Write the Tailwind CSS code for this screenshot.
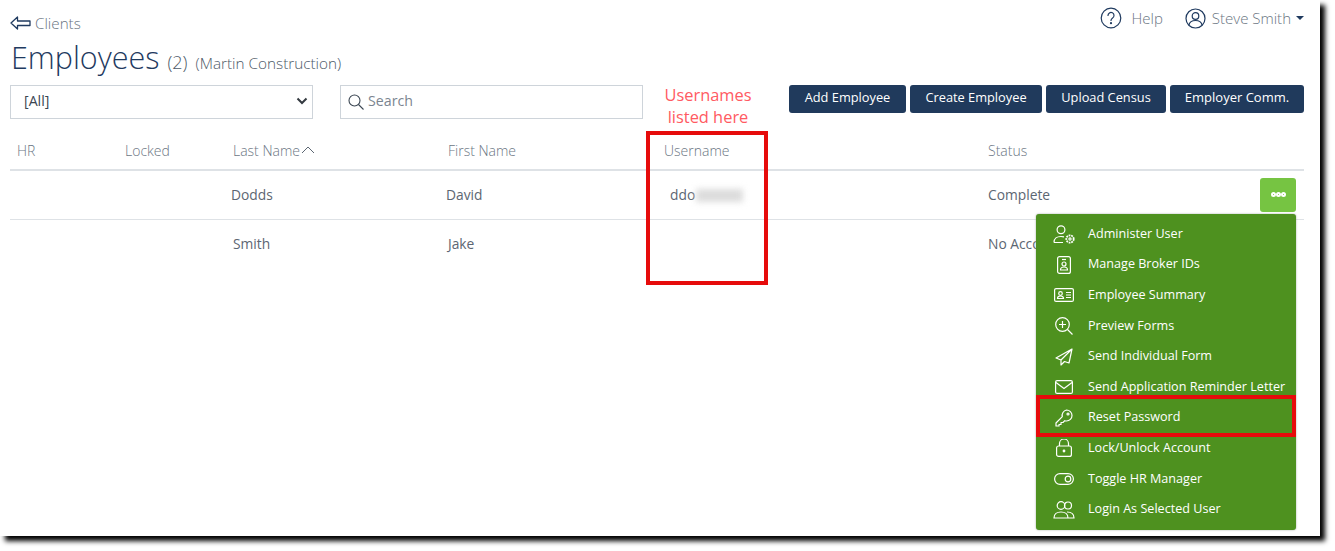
<!DOCTYPE html>
<html lang="en">
<head>
<meta charset="utf-8"/>
<title>Employees</title>
<script src="https://cdn.jsdelivr.net/npm/@tailwindcss/browser@4"></script>
</head>
<body class="bg-white overflow-hidden font-['Open_Sans',sans-serif] text-[13.8px] text-[#5c6672]">
<div class="w-[1335px] h-[551px] overflow-hidden">
  <!-- framed screenshot -->
  <div class="relative w-[1320px] h-[536px] bg-white shadow-[5px_5px_5px_#000] px-[10px]">
    <!-- top row -->
    <div class="w-[1294px] h-[40px] flex justify-between pt-[6px]">
      <a class="flex items-center gap-[4px] h-[34px] text-[15.2px] text-[#6b7683] font-light">
        <svg width="21" height="14" viewBox="0 0 21 14" fill="none" stroke="#1f3a5f" stroke-width="1.300" stroke-linejoin="round"><path d="M7.500 1 1 7l6.500 6V9.500H20V5H7.500z"/></svg>
        <span>Clients</span>
      </a>
      <div class="flex items-start gap-[22px] text-[#6b7683] font-light text-[15px]">
        <div class="flex items-center gap-[9px] h-[24px]">
          <svg width="22" height="22" viewBox="0 0 22 22" fill="none" stroke="#1f3a5f" stroke-width="1.200"><circle cx="11" cy="11" r="9.800"/><path d="M8 8.500a3 3 0 1 1 4.600 2.500c-1 .7-1.600 1.200-1.600 2.500" stroke-linecap="round"/><circle cx="11" cy="16.200" r=".5"/></svg>
          <span>Help</span>
        </div>
        <div class="flex items-center gap-[6px] h-[24px]">
          <svg width="21" height="21" viewBox="0 0 21 21" fill="none" stroke="#1f3a5f" stroke-width="1.200"><circle cx="10.500" cy="10.500" r="9.500"/><circle cx="10.500" cy="8" r="3.300"/><path d="M4 17c.6-3 2.800-4.500 6.500-4.500S16.400 14 17 17"/></svg>
          <span>Steve Smith</span>
          <span class="w-0 h-0 border-x-[4px] border-x-transparent border-t-[4px] border-t-[#1f3a5f] -ml-[1px]"></span>
        </div>
      </div>
    </div>
    <!-- heading -->
    <div class="h-[39px] flex items-baseline pl-[1px] font-light">
      <h1 class="text-[30.500px] leading-[34px] text-[#1f3a5f] font-light">Employees</h1>
      <span class="text-[18px] ml-[8px] text-[#4d5a68]">(2)</span>
      <span class="text-[15.300px] ml-[8px] text-[#4d5a68]">(Martin Construction)</span>
    </div>
    <!-- filters and buttons -->
    <div class="w-[1294px] flex items-start mt-[6px]">
      <div class="w-[303px] h-[34px] border border-[#ced4da] flex items-center justify-between pl-[13px] pr-[4px] pb-[2px] text-[14.200px] text-[#3b4652]">
        <span>[All]</span>
        <svg width="12" height="8" viewBox="0 0 12 8" fill="none" stroke="#343a40" stroke-width="2"><path d="m1.500 1.500 4.500 4.500 4.500-4.500"/></svg>
      </div>
      <div class="w-[303px] h-[34px] ml-[27px] border border-[#ced4da] flex items-center pl-[7px] gap-[4px] text-[14.200px] text-[#7b8590]">
        <svg width="16" height="16" viewBox="0 0 16 16" fill="none" stroke="#3b4652" stroke-width="1.100"><circle cx="6.500" cy="6.500" r="5.500"/><path d="m10.500 10.500 5 5"/></svg>
        <span class="-mt-[2px]">Search</span>
      </div>
      <div class="ml-auto flex gap-[4px] text-[12.800px] text-white">
        <button class="w-[117px] h-[28px] pb-[2px] bg-[#203a5c] rounded-[3px]">Add Employee</button>
        <button class="w-[132px] h-[28px] pb-[2px] bg-[#203a5c] rounded-[3px]">Create Employee</button>
        <button class="w-[120px] h-[28px] pb-[2px] bg-[#203a5c] rounded-[3px]">Upload Census</button>
        <button class="w-[134px] h-[28px] pb-[2px] bg-[#203a5c] rounded-[3px] text-[13px]">Employer Comm.</button>
      </div>
    </div>
    <!-- table -->
    <div class="w-[1294px] mt-[14px]">
      <div class="grid grid-cols-[108px_108px_215px_216px_324px_1fr] h-[38px] border-b-2 border-[#dee2e6] pl-[7px] pb-[2px] items-center font-light text-[14px] text-[#6b7683]">
        <span>HR</span>
        <span>Locked</span>
        <span class="flex items-center gap-[1px]">Last Name<svg width="14" height="8" viewBox="0 0 14 8" fill="none" stroke="#5c6672" stroke-width="1"><path d="m1 7 6-6 6 6"/></svg></span>
        <span>First Name</span>
        <span>Username</span>
        <span>Status</span>
      </div>
      <div class="grid grid-cols-[108px_108px_215px_216px_324px_1fr] h-[49px] border-b border-[#dee2e6] pl-[7px] items-center">
        <span></span>
        <span></span>
        <span class="-ml-[2px]">Dodds</span>
        <span class="-ml-[2px]">David</span>
        <span class="pl-[6px] flex items-center">ddo<span class="w-[47px] h-[13px] bg-[#dcdcdc] blur-[3px] ml-[1px]"></span></span>
        <span class="flex items-center justify-between pr-[8px]"><span>Complete</span>
          <button class="w-[36px] h-[34px] bg-[#76c442] rounded-[3px] flex items-center justify-center pb-[2px]">
            <span class="w-[5px] h-[5px] rounded-full border-2 border-white"></span>
            <span class="w-[5px] h-[5px] rounded-full border-2 border-white"></span>
            <span class="w-[5px] h-[5px] rounded-full border-2 border-white"></span>
          </button>
        </span>
      </div>
      <div class="grid grid-cols-[108px_108px_215px_216px_324px_1fr] h-[49px] pl-[7px] items-center">
        <span></span>
        <span></span>
        <span>Smith</span>
        <span>Jake</span>
        <span></span>
        <span>No Account</span>
      </div>
    </div>

    <!-- dropdown menu over the table -->
    <div class="absolute left-[1036px] top-[214px] w-[260px] h-[316px] bg-[#4e911f] rounded-[3px] text-white text-[12.600px] pt-[5px] shadow-[0_0_2px_#9aa39a]">
      <div class="h-[30.600px] flex items-center"><span class="w-[52px] flex justify-center pl-[4px]">
        <svg width="22" height="19" viewBox="0 0 22 19" fill="none" stroke="white" stroke-width="1.200"><circle cx="8" cy="4.700" r="3.900"/><path d="M1 17.500c0-3.800 3-6 7-6 1 0 2 .1 3 .4M1 17.500h9"/><circle cx="17" cy="14" r="3.700" stroke-width="1.800" stroke-dasharray="1.800 .8"/><circle cx="17" cy="14" r="1.100"/></svg></span><span>Administer User</span></div>
      <div class="h-[30.600px] flex items-center"><span class="w-[52px] flex justify-center pl-[4px]">
        <svg width="14" height="18" viewBox="0 0 14 18" fill="none" stroke="white" stroke-width="1.200"><rect x=".6" y=".6" width="12.800" height="16.800" rx="2"/><path d="M5 3.500h4"/><circle cx="7" cy="8" r="2"/><path d="M3.500 14c0-2 1.500-3 3.500-3s3.500 1 3.500 3z"/></svg></span><span>Manage Broker IDs</span></div>
      <div class="h-[30.600px] flex items-center"><span class="w-[52px] flex justify-center pl-[4px]">
        <svg width="20" height="14" viewBox="0 0 20 14" fill="none" stroke="white" stroke-width="1.200"><rect x=".6" y=".6" width="18.800" height="12.800" rx="1.500"/><circle cx="6.500" cy="5.500" r="1.800"/><path d="M3.500 10.500c0-1.800 1.300-2.500 3-2.500s3 .7 3 2.500z"/><path d="M12 4.500h5M12 7h5M12 9.500h5"/></svg></span><span>Employee Summary</span></div>
      <div class="h-[30.600px] flex items-center"><span class="w-[52px] flex justify-center pl-[4px]">
        <svg width="18" height="18" viewBox="0 0 18 18" fill="none" stroke="white" stroke-width="1.200"><circle cx="7.500" cy="7.500" r="6.800"/><path d="m12.500 12.500 5 5M7.500 4v7M4 7.500h7"/></svg></span><span>Preview Forms</span></div>
      <div class="h-[30.600px] flex items-center"><span class="w-[52px] flex justify-center pl-[4px]">
        <svg width="18" height="18" viewBox="0 0 18 18" fill="none" stroke="white" stroke-width="1.200" stroke-linejoin="round"><path d="M17 1 1 10l5 2zM17 1 6 12v5l3.500-3.500L14 15z"/></svg></span><span>Send Individual Form</span></div>
      <div class="h-[30.600px] flex items-center"><span class="w-[52px] flex justify-center pl-[4px]">
        <svg width="18" height="14" viewBox="0 0 18 14" fill="none" stroke="white" stroke-width="1.200"><rect x=".6" y=".6" width="16.800" height="12.800" rx="1.500"/><path d="m1 2.500 8 6 8-6"/></svg></span><span>Send Application Reminder Letter</span></div>
      <div class="h-[30.600px] flex items-center"><span class="w-[52px] flex justify-center pl-[4px]">
        <svg width="18" height="18" viewBox="0 0 18 18" fill="none" stroke="white" stroke-width="1.200" stroke-linejoin="round"><path d="M11.500 1a5.500 5.500 0 0 1 0 11c-.6 0-1.200-.1-1.700-.3L8 13.500H6v2H4v1.500H1v-3l6.300-6.300A5.500 5.500 0 0 1 11.500 1z"/><circle cx="13" cy="5" r="1"/></svg></span><span>Reset Password</span></div>
      <div class="h-[30.600px] flex items-center"><span class="w-[52px] flex justify-center pl-[4px]">
        <svg width="16" height="18" viewBox="0 0 16 18" fill="none" stroke="white" stroke-width="1.200"><rect x=".6" y="7" width="14.800" height="10.400" rx="2"/><path d="M3.500 7V4.500a4.500 4.500 0 0 1 9 0V7"/><circle cx="8" cy="12" r=".8" fill="white"/></svg></span><span>Lock/Unlock Account</span></div>
      <div class="h-[30.600px] flex items-center"><span class="w-[52px] flex justify-center pl-[4px]">
        <svg width="20" height="12" viewBox="0 0 20 12" fill="none" stroke="white" stroke-width="1.200"><rect x=".6" y=".6" width="18.800" height="10.800" rx="5.400"/><circle cx="14" cy="6" r="2.800"/></svg></span><span>Toggle HR Manager</span></div>
      <div class="h-[30.600px] flex items-center"><span class="w-[52px] flex justify-center pl-[4px]">
        <svg width="22" height="18" viewBox="0 0 22 18" fill="none" stroke="white" stroke-width="1.200"><circle cx="8" cy="4.500" r="3.800"/><circle cx="15" cy="4.500" r="3.500"/><path d="M1 17c0-3.800 3-6 7-6s7 2.200 7 6zM14 11c4 0 7 2 7 6h-6"/></svg></span><span>Login As Selected User</span></div>
    </div>

    <!-- annotations over the screenshot -->
    <div class="absolute left-[646px] top-[131px] w-[122px] h-[154px] border-4 border-[#e60b0b]"></div>
    <div class="absolute left-[1036px] top-[395px] w-[260px] h-[42px] border-4 border-[#e60b0b]"></div>
    <div class="absolute left-[648px] top-[84px] w-[120px] text-center text-[16.400px] leading-[22px] text-[#ff5a62]">Usernames<br/>listed here</div>
  </div>
</div>
</body>
</html>
